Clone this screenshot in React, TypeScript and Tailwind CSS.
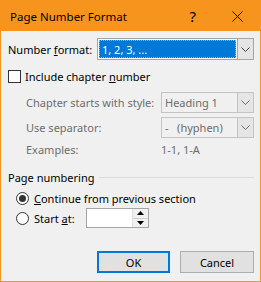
import React from 'react';

const Chevron = ({ color = '#3c3c3c' }: { color?: string }) => (
  <svg width="9" height="5" viewBox="0 0 9 5">
    <path d="M0.5 0.5 L4.5 4.5 L8.5 0.5" fill="none" stroke={color} strokeWidth="1" />
  </svg>
);

const Radio = ({ checked }: { checked?: boolean }) => (
  <div className="w-[13px] h-[13px] rounded-full border border-[#333] bg-white flex items-center justify-center">
    {checked && <div className="w-[7px] h-[7px] rounded-full bg-[#333]" />}
  </div>
);

const DisabledCombo = ({ value }: { value: string }) => (
  <div className="flex w-[93px] h-[21px] border border-[#c4c4c4] bg-[#f0f0f0]">
    <div className="flex-1 flex items-center pl-[3px] text-[#6d6d6d] whitespace-pre">{value}</div>
    <div className="w-[16px] flex items-center justify-center bg-[#e5e5e5] border-l border-[#c4c4c4]">
      <Chevron color="#6d6d6d" />
    </div>
  </div>
);

export default function App() {
  return (
    <div
      className="w-[261px] h-[282px] border border-[#f7941d] bg-[#f0f0f0] text-[11px] leading-[15px] text-black whitespace-nowrap"
      style={{ fontFamily: '"Noto Sans", sans-serif' }}
    >
      <div className="h-[30px] bg-[#f7941d] flex items-center pl-[9px]">
        <span className="flex-1 pt-[1px] text-[11.5px]">Page Number Format</span>
        <span className="text-[15px] mr-[36px]">?</span>
        <svg width="11" height="11" viewBox="0 0 11 11" className="mr-[17px]">
          <path d="M0.5 0.5 L10.5 10.5 M10.5 0.5 L0.5 10.5" stroke="#000" strokeWidth="1" />
        </svg>
      </div>

      <div className="pl-[7px] pr-[6px]">
        <div className="flex items-center mt-[7px] h-[22px]">
          <div className="w-[89px]">
            Number <span className="underline">f</span>ormat:
          </div>
          <div className="flex w-[157px] h-[22px] border border-[#a6a6a6] bg-white">
            <div className="flex-1 p-[1px]">
              <div className="h-full bg-[#0078d7] border border-dotted border-[#f6a04d] text-white flex items-center pl-[2px]">
                1, 2, 3, ...
              </div>
            </div>
            <div className="w-[16px] flex items-center justify-center bg-[#e5e5e5] border-l border-[#a6a6a6]">
              <Chevron />
            </div>
          </div>
        </div>

        <div className="flex items-center mt-[10px] h-[13px] gap-[4px]">
          <div className="w-[13px] h-[13px] border border-[#333] bg-white" />
          <span>
            Include chapter <span className="underline">n</span>umber
          </span>
        </div>

        <div className="pl-[18px] text-[#6d6d6d]">
          <div className="flex items-center mt-[9px] h-[21px]">
            <div className="w-[135px]">Chapter starts with style:</div>
            <DisabledCombo value="Heading 1" />
          </div>
          <div className="flex items-center mt-[4px] h-[21px]">
            <div className="w-[135px]">Use separator:</div>
            <DisabledCombo value={'-   (hyphen)'} />
          </div>
          <div className="flex items-center mt-[4px] h-[15px]">
            <div className="w-[135px]">Examples:</div>
            <div>1-1, 1-A</div>
          </div>
        </div>

        <div className="flex items-center mt-[13px] h-[15px]">
          <span>Page numbering</span>
          <div className="flex-1 ml-[5px] h-px bg-[#dcdcdc]" />
        </div>

        <div className="pl-[8px]">
          <div className="flex items-center mt-[3px] h-[20px] gap-[5px]">
            <Radio checked />
            <span>
              <span className="underline">C</span>ontinue from previous section
            </span>
          </div>
          <div className="flex items-center h-[20px] gap-[5px]">
            <Radio />
            <span className="w-[47px]">
              Start <span className="underline">a</span>t:
            </span>
            <div className="flex w-[63px] h-[20px] border border-[#a6a6a6] bg-white">
              <div className="flex-1" />
              <div className="w-[16px] flex flex-col border-l border-[#e0e0e0]">
                <div className="flex-1 flex items-center justify-center bg-[#f0f0f0] border-b border-[#d0d0d0]">
                  <svg width="7" height="4" viewBox="0 0 7 4">
                    <path d="M0 4 L3.5 0 L7 4 Z" fill="#000" />
                  </svg>
                </div>
                <div className="flex-1 flex items-center justify-center bg-[#f0f0f0]">
                  <svg width="7" height="4" viewBox="0 0 7 4">
                    <path d="M0 0 L3.5 4 L7 0 Z" fill="#000" />
                  </svg>
                </div>
              </div>
            </div>
          </div>
        </div>

        <div className="flex justify-end gap-[10px] mt-[23px]">
          <button className="w-[73px] h-[22px] border-2 border-[#0078d7] bg-[#e1e1e1]">OK</button>
          <button className="w-[74px] h-[22px] border border-[#adadad] bg-[#e1e1e1]">Cancel</button>
        </div>
      </div>
    </div>
  );
}
